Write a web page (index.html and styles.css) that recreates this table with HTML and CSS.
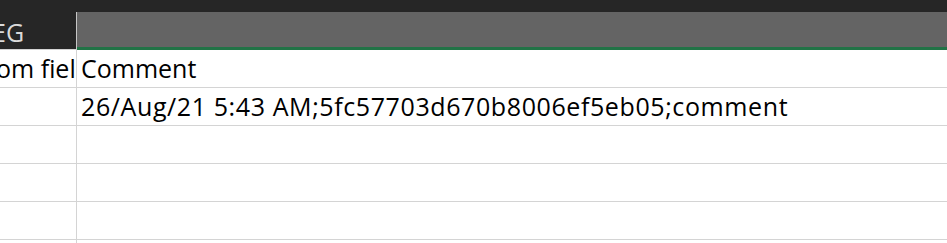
FILE: index.html
```html
<!DOCTYPE html>
<html lang="en">
<head>
<meta charset="utf-8">
<title>Sheet</title>
<link rel="stylesheet" href="styles.css">
</head>
<body>
<div class="sheet">
  <div class="topbar"></div>
  <div class="grid">
    <div class="col-head col-head--prev"><span class="col-label">EG</span></div>
    <div class="col-head col-head--active"></div>

    <div class="cell cell--prev"><span class="spill">Custom field</span></div>
    <div class="cell">Comment</div>

    <div class="cell cell--prev"></div>
    <div class="cell cell--log">26/Aug/21 5:43 AM;5fc57703d670b8006ef5eb05;comment</div>

    <div class="cell cell--prev"></div>
    <div class="cell"></div>

    <div class="cell cell--prev"></div>
    <div class="cell"></div>

    <div class="cell cell--prev"></div>
    <div class="cell"></div>

    <div class="cell cell--prev"></div>
    <div class="cell"></div>
  </div>
</div>
</body>
</html>
```

FILE: styles.css
```css
html, body {
  margin: 0;
  padding: 0;
  background: #ffffff;
}

.sheet {
  width: 947px;
  height: 243px;
  overflow: hidden;
  font-family: "Open Sans", "Liberation Sans", Arial, sans-serif;
  font-size: 25px;
  line-height: 25px;
  color: #000000;
}

.topbar {
  height: 12px;
  background: #262626;
}

.grid {
  display: grid;
  grid-template-columns: 77px 1fr;
  grid-auto-rows: 38px;
}

/* column header strip */
.col-head {
  box-sizing: border-box;
  display: flex;
  align-items: flex-end;
  overflow: hidden;
  white-space: nowrap;
}

.col-head--prev {
  background: #262626;
  border-right: 1px solid #c6c6c6;
  border-bottom: 1px solid #d4d4d4;
  padding-bottom: 4px;
  color: #dadada;
}

.col-label {
  margin-left: -8px;
}

.col-head--active {
  background: #646464;
  border-bottom: 3px solid #217346;
}

/* body cells */
.cell {
  box-sizing: border-box;
  display: flex;
  align-items: flex-end;
  padding: 0 0 6px 4px;
  border-bottom: 1px solid #d4d4d4;
  overflow: hidden;
  white-space: nowrap;
}

.cell--prev {
  justify-content: flex-end;
  padding-left: 0;
  border-right: 1px solid #d4d4d4;
}

.cell--log {
  letter-spacing: 0.6px;
}

.spill {
  margin-right: -15px;
}
```
